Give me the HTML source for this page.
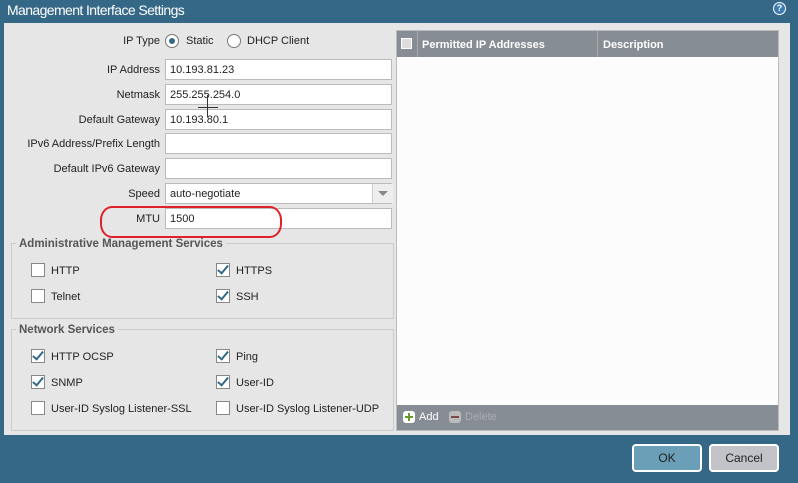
<!DOCTYPE html>
<html><head><style>
body{margin:0;width:798px;height:483px;background:#356887;font-family:"Liberation Sans",sans-serif;font-size:11px;color:#222;position:relative;overflow:hidden}
.a{position:absolute}
.title{left:7px;top:2px;color:#fff;font-size:14px;letter-spacing:-0.6px}
.panel{left:4px;top:23px;width:786px;height:412px;background:#e6e6e6}
.lbl{text-align:right;width:155px;left:5px}
.inp{left:165px;width:227px;background:#fff;border:1px solid #bbb;line-height:20px;padding-left:4px;box-sizing:border-box;height:21px}
.cb{width:12px;height:12px;border:1px solid #888;background:#fff}
.cb.c::after{content:"";position:absolute;left:3px;top:-1px;width:4px;height:9px;border:solid #346b8a;border-width:0 2px 2px 0;transform:rotate(40deg)}
fieldset{position:absolute;border:1px solid #ccc;margin:0;padding:0}
.leg{font-weight:bold;color:#555;background:#e6e6e6;padding:0 3px;font-size:11.5px}
.btn{border:2px solid #fff;border-radius:4px;height:24px;line-height:24px;text-align:center;width:66px;top:444px;color:#222;font-size:12px}
</style></head><body>
<div class="a title">Management Interface Settings</div>
<div class="a" style="left:773px;top:2px;width:13px;height:13px;border-radius:50%;background:#fff;"><div class="a" style="left:1px;top:1px;width:11px;height:11px;border-radius:50%;background:#3d7cb0;color:#fff;font-size:9px;font-weight:bold;text-align:center;line-height:11px">?</div></div>
<div class="a panel"></div>
<div class="a lbl" style="top:35px">IP Type</div>
<div class="a" style="left:165px;top:34px;width:12px;height:12px;border:1px solid #777;border-radius:50%;background:#fff"><div class="a" style="left:3px;top:3px;width:6px;height:6px;border-radius:50%;background:#346b8a"></div></div>
<div class="a" style="left:186px;top:35px">Static</div>
<div class="a" style="left:227px;top:34px;width:12px;height:12px;border:1px solid #777;border-radius:50%;background:#fff"></div>
<div class="a" style="left:247px;top:35px">DHCP Client</div>
<div class="a lbl" style="top:64px">IP Address</div><div class="a inp" style="top:59px">10.193.81.23</div>
<div class="a lbl" style="top:89px">Netmask</div><div class="a inp" style="top:84px">255.255.254.0</div>
<div class="a lbl" style="top:114px">Default Gateway</div><div class="a inp" style="top:109px">10.193.80.1</div>
<div class="a lbl" style="top:138px">IPv6 Address/Prefix Length</div><div class="a inp" style="top:133px"></div>
<div class="a lbl" style="top:163px">Default IPv6 Gateway</div><div class="a inp" style="top:158px"></div>
<div class="a lbl" style="top:188px">Speed</div><div class="a inp" style="top:183px">auto-negotiate</div>
<div class="a" style="left:372px;top:184px;width:20px;height:19px;background:#eee;border-left:1px solid #ccc"><div class="a" style="left:5px;top:7px;border-left:5px solid transparent;border-right:5px solid transparent;border-top:5px solid #888"></div></div>
<div class="a lbl" style="top:213px">MTU</div><div class="a inp" style="top:208px">1500</div>
<div class="a" style="left:100px;top:206px;width:178px;height:28px;border:2px solid #e0202a;border-radius:12px/14px"></div>
<div class="a" style="left:207px;top:95px;width:1px;height:22px;background:#333"></div>
<div class="a" style="left:198px;top:107px;width:20px;height:1px;background:#333"></div>
<fieldset style="left:11px;top:243px;width:381px;height:74px"></fieldset>
<div class="a leg" style="left:16px;top:238px">Administrative Management Services</div>
<div class="a cb" style="left:31px;top:263px"></div><div class="a" style="left:51px;top:265px">HTTP</div>
<div class="a cb c" style="left:216px;top:263px"></div><div class="a" style="left:236px;top:265px">HTTPS</div>
<div class="a cb" style="left:31px;top:289px"></div><div class="a" style="left:51px;top:291px">Telnet</div>
<div class="a cb c" style="left:216px;top:289px"></div><div class="a" style="left:236px;top:291px">SSH</div>
<fieldset style="left:11px;top:329px;width:381px;height:100px"></fieldset>
<div class="a leg" style="left:16px;top:324px">Network Services</div>
<div class="a cb c" style="left:31px;top:349px"></div><div class="a" style="left:51px;top:351px">HTTP OCSP</div>
<div class="a cb c" style="left:216px;top:349px"></div><div class="a" style="left:236px;top:351px">Ping</div>
<div class="a cb c" style="left:31px;top:375px"></div><div class="a" style="left:51px;top:377px">SNMP</div>
<div class="a cb c" style="left:216px;top:375px"></div><div class="a" style="left:236px;top:377px">User-ID</div>
<div class="a cb" style="left:31px;top:401px"></div><div class="a" style="left:51px;top:403px">User-ID Syslog Listener-SSL</div>
<div class="a cb" style="left:216px;top:401px"></div><div class="a" style="left:236px;top:403px">User-ID Syslog Listener-UDP</div>
<div class="a" style="left:396px;top:30px;width:383px;height:401px;background:#fbfcfb;border:1px solid #bbb;box-sizing:border-box"></div>
<div class="a" style="left:397px;top:31px;width:381px;height:26px;background:#878d94;color:#fff;font-size:11px;font-weight:bold;line-height:28px">
<div class="a" style="left:4px;top:7px;width:11px;height:11px;background:#ddd;border:1px solid #fff;box-sizing:border-box"></div>
<div class="a" style="left:20px;top:0;width:1px;height:26px;background:#aaa"></div>
<div class="a" style="left:25px">Permitted IP Addresses</div>
<div class="a" style="left:200px;top:0;width:1px;height:26px;background:#aaa"></div>
<div class="a" style="left:206px">Description</div></div>
<div class="a" style="left:397px;top:405px;width:381px;height:25px;background:#878d94;font-size:11px;line-height:25px">
<div class="a" style="left:6px;top:6px;width:12px;height:12px;border-radius:3px;background:#fff"><div class="a" style="left:2px;top:5px;width:8px;height:2px;background:#6a9a2a"></div><div class="a" style="left:5px;top:2px;width:2px;height:8px;background:#6a9a2a"></div></div>
<div class="a" style="left:22px;color:#fff">Add</div>
<div class="a" style="left:52px;top:6px;width:12px;height:12px;border-radius:3px;background:#bbb"><div class="a" style="left:2px;top:5px;width:8px;height:2px;background:#7a4a4a"></div></div>
<div class="a" style="left:68px;color:#a8adb3">Delete</div></div>
<div class="a btn" style="left:632px;background:#6b9fb8">OK</div>
<div class="a btn" style="left:709px;background:#c1c3c9">Cancel</div>
</body></html>
